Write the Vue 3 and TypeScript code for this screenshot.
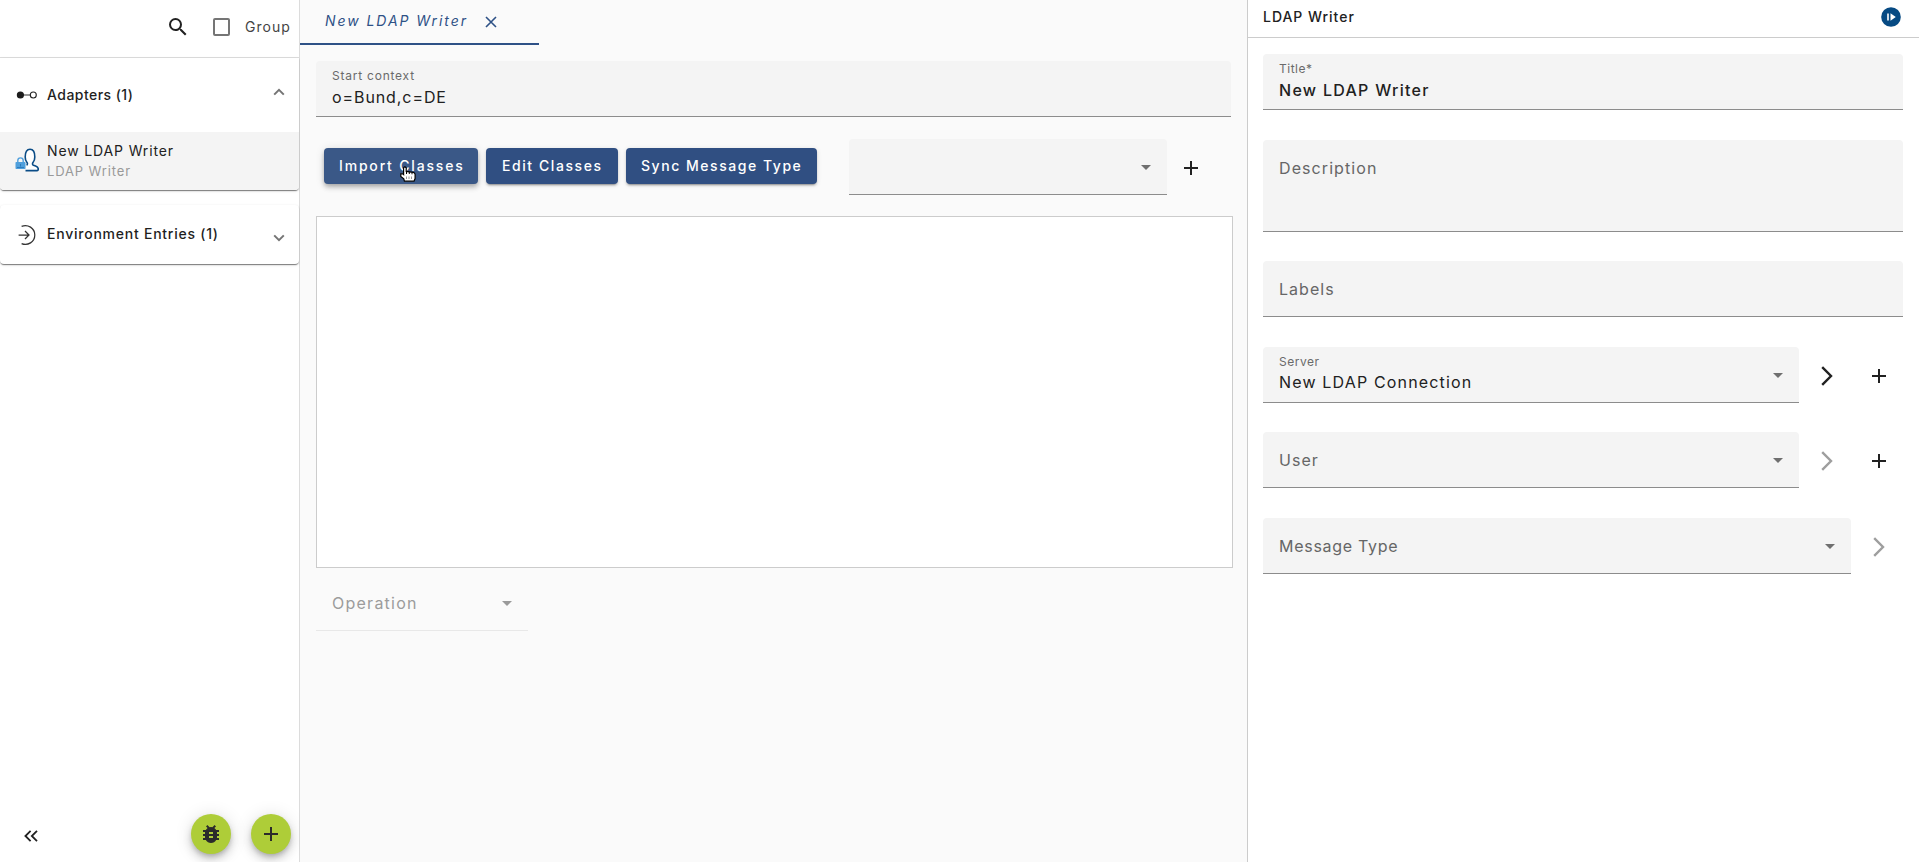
<script setup lang="ts">
interface Field {
  id: string
  label: string
  value?: string
  select?: boolean
  open?: boolean
  openEnabled?: boolean
  add?: boolean
}

const fields: Field[] = [
  { id: 'title', label: 'Title*', value: 'New LDAP Writer' },
  { id: 'description', label: 'Description' },
  { id: 'labels', label: 'Labels' },
  { id: 'server', label: 'Server', value: 'New LDAP Connection', select: true, open: true, openEnabled: true, add: true },
  { id: 'user', label: 'User', select: true, open: true, add: true },
  { id: 'message', label: 'Message Type', select: true, open: true },
]
</script>

<template>
  <div class="app">
    <aside class="sidebar">
      <header class="tools">
        <svg class="search" viewBox="0 0 24 24"><path d="M15.5 14h-.79l-.28-.27A6.47 6.47 0 0 0 16 9.5 6.5 6.5 0 1 0 9.5 16c1.61 0 3.09-.59 4.23-1.57l.27.28v.79l5 4.99L20.49 19l-4.99-5zm-6 0C7.01 14 5 11.99 5 9.5S7.01 5 9.5 5 14 7.01 14 9.5 11.99 14 9.5 14z" /></svg>
        <span class="checkbox"></span>
        <span class="group-label">Group</span>
      </header>

      <section class="panel adapters">
        <div class="panel-head">
          <svg class="panel-icon" viewBox="0 0 24 24"><path d="M8 12h7" stroke="#555" stroke-width="1.2" /><circle cx="5.4" cy="12" r="3.6" fill="#1c1c1c" /><circle cx="18.3" cy="12" r="3" fill="#fff" stroke="#222" stroke-width="1.1" /></svg>
          <span class="panel-title t-adapters">Adapters (1)</span>
          <svg class="chev up" viewBox="0 0 12 8"><path d="M1.2 6.6 6 1.8l4.8 4.8" /></svg>
        </div>
        <div class="entry">
          <svg class="entry-icon" viewBox="0 0 24 24">
            <path d="M10.500 22.600h11.500q1.400-.2 1.300-1.700-.2-2.200-2.700-3l-2.200-.7c-1.100-.5-1.100-1.700-.4-2.600 1.300-1.500 1.800-3 1.800-5.600C19.800 4 18.300 1.200 15 1.200S10.200 4 10.200 9c0 2.600.5 4.100 1.800 5.600.7.900.6 2-.4 2.600" fill="#fff" stroke="#0a4c86" stroke-width="1.600" />
            <path d="M2.800 14.500v-1.900a2.700 2.700 0 0 1 5.400 0v1.900" fill="none" stroke="#4f9fdc" stroke-width="1.400" />
            <rect x=".5" y="14" width="10" height="7" rx=".8" fill="#4f9fdc" /><path d="M5.500 16v2.600M2 19.500h7" stroke="#2b78b8" stroke-width=".9" />
          </svg>
          <div class="entry-text">
            <span class="entry-name">New LDAP Writer</span>
            <span class="entry-type">LDAP Writer</span>
          </div>
        </div>
      </section>

      <section class="panel environment">
        <div class="panel-head">
          <svg class="panel-icon" viewBox="0 0 24 24"><path d="M6.600 3.400A9.400 9.400 0 1 1 6.600 20.600M3.600 12h10.200M10 8l4 4-4 4" fill="none" stroke="#333" stroke-width="1.250" /></svg>
          <span class="panel-title t-environment">Environment Entries (1)</span>
          <svg class="chev down" viewBox="0 0 12 8"><path d="M1.200 1.400 6 6.200l4.800-4.800" /></svg>
        </div>
      </section>

      <footer class="actions">
        <svg class="collapse" viewBox="0 0 14 12"><path d="M6.600.8 1.400 6l5.200 5.200M13 .8 7.800 6l5.200 5.200" /></svg>
        <button class="fab bug"><svg viewBox="0 0 24 24"><path d="M20 8h-2.810a5.985 5.985 0 0 0-1.820-1.960L17 4.410 15.590 3l-2.170 2.170a6.002 6.002 0 0 0-2.830 0L8.410 3 7 4.410l1.620 1.630C7.880 6.550 7.260 7.220 6.810 8H4v2h2.090c-.05.330-.09.660-.09 1v1H4v2h2v1c0 .340.040.670.090 1H4v2h2.810A5.990 5.990 0 0 0 12 21c2.220 0 4.160-1.210 5.190-3H20v-2h-2.090c.050-.330.090-.660.090-1v-1h2v-2h-2v-1c0-.340-.040-.670-.090-1H20V8zm-6 8h-4v-2h4v2zm0-4h-4v-2h4v2z" /></svg></button>
        <button class="fab"><svg viewBox="0 0 24 24"><path d="M12 5v14M5 12h14" stroke="#2b2b2b" stroke-width="2" /></svg></button>
      </footer>
    </aside>

    <main class="editor">
      <nav class="tab">
        <span class="tab-name">New LDAP Writer</span>
        <svg class="close" viewBox="0 0 12 12"><path d="m1 1 10 10M11 1 1 11" /></svg>
      </nav>
      <div class="content">
        <div class="field filled start">
          <span class="label">Start context</span>
          <span class="value">o=Bund,c=DE</span>
        </div>
        <div class="toolbar">
          <button class="btn import">Import Classes
            <svg class="pointer" viewBox="0 0 16 16"><path d="M3.600 1.800Q4.800 0 6.200 1.800V5.400l7 1q1.900.4 1.900 2v4.200L14 15.200H4.400L3.800 12.800.8 10.400V7.800h2.100l.7.700z" fill="#fff" stroke="#000" stroke-width="1.200" /><path d="M6.500 5v3M9.300 6v2M12 6.500v1.800" stroke="#000" /><path d="M6.500 10.500v2.500M9 10.500v2.500M11.500 10.500v2.500" stroke="#999" /></svg>
          </button>
          <button class="btn edit">Edit Classes</button>
          <button class="btn sync">Sync Message Type</button>
          <div class="field class-select"><i class="caret"></i></div>
          <svg class="plus" viewBox="0 0 14 14"><path d="M7 0v14M0 7h14" /></svg>
        </div>
        <div class="canvas"></div>
        <div class="field disabled operation"><span class="label">Operation</span><i class="caret"></i></div>
      </div>
    </main>

    <aside class="details">
      <header class="details-head">
        <span class="details-title">LDAP Writer</span>
        <svg class="run" viewBox="0 0 20 20"><circle cx="10" cy="10" r="9.800" fill="#064a83" /><path d="M6.200 6.500h1.600v7H6.200zM9.500 6.200v7.600l5.300-3.800z" fill="#fff" /></svg>
      </header>
      <div class="form">
        <div v-for="f in fields" :key="f.id" class="row" :class="'row-' + f.id">
          <div class="field" :class="[f.id, { filled: f.value }]">
            <span class="label">{{ f.label }}</span>
            <span v-if="f.value" class="value">{{ f.value }}</span>
            <i v-if="f.select" class="caret"></i>
          </div>
          <span v-if="f.open" class="slot"><svg class="go" :class="{ off: !f.openEnabled }" viewBox="0 0 12 20"><path d="m1.200 1.200 8.800 8.800-8.800 8.800" /></svg></span>
          <span v-if="f.add" class="slot"><svg class="plus" viewBox="0 0 14 14"><path d="M7 0v14M0 7h14" /></svg></span>
        </div>
      </div>
    </aside>
  </div>
</template>

<style>
body { margin: 0; overflow: hidden; }
</style>

<style scoped>
* { box-sizing: border-box; }
.app { display: flex; height: 862px; background: #fff; color: #212121; font: 400 14px Inter, "Open Sans", sans-serif; white-space: nowrap; }
svg { display: block; flex: none; }
button { border: 0; padding: 0; font: inherit; }

.sidebar { width: 300px; flex: none; display: flex; flex-direction: column; border-right: 1px solid #dcdcdc; }
.tools { height: 58px; padding: 0 8px 4px 166px; display: flex; align-items: center; border-bottom: 1px solid #dedede; }
.search { width: 24px; height: 24px; fill: #212121; }
.checkbox { width: 18px; height: 18px; margin-left: 23px; border: 2px solid #757575; border-radius: 2px; }
.group-label { margin-left: 15px; letter-spacing: 1.07px; color: #444; }
.panel { background: #fff; border-radius: 0 0 4px 4px; box-shadow: 0 2px 1px -1px rgba(0,0,0,.3), 0 1px 1px rgba(0,0,0,.22), 0 1px 3px rgba(0,0,0,.14); }
.panel-head { display: flex; align-items: center; padding: 0 14px 0 15px; }
.adapters .panel-head { height: 74px; }
.environment { margin-top: 15px; border-radius: 4px; }
.environment .panel-head { height: 59px; }
.panel-icon { width: 24px; height: 24px; }
.panel-title { margin: 0 0 2px 8px; font-weight: 450; color: #1f1f1f; }
.t-adapters { letter-spacing: .46px; }
.t-environment { letter-spacing: .76px; }
.chev { width: 12px; height: 8px; margin-left: auto; fill: none; stroke: #757575; stroke-width: 2; }
.up { margin-bottom: 6px; }
.down { margin-top: 6px; }
.entry { height: 58px; display: flex; padding: 8px 15px; background: #f4f4f4; border-radius: 0 0 4px 4px; }
.entry-icon { width: 24px; height: 24px; margin-top: 8px; }
.entry-text { margin-left: 8px; display: flex; flex-direction: column; }
.entry-name { line-height: 22px; letter-spacing: .86px; }
.entry-type { line-height: 18px; font-size: 13px; letter-spacing: .86px; color: #999; }
.actions { margin-top: auto; display: flex; align-items: center; padding: 0 8px 8px 24px; }
.collapse { width: 14px; height: 12px; margin-top: 4px; margin-right: auto; fill: none; stroke: #212121; stroke-width: 1.8; }
.fab { width: 40px; height: 40px; border-radius: 50%; background: #aecd38; display: flex; align-items: center; justify-content: center; box-shadow: 0 3px 5px -1px rgba(0,0,0,.2), 0 6px 10px rgba(0,0,0,.14), 0 1px 18px rgba(0,0,0,.12); }
.fab svg { width: 24px; height: 24px; fill: #2b2b2b; }
.fab.bug { margin-right: 20px; }

.editor { width: 947px; flex: none; background: #fafafa; }
.tab { width: 239px; height: 45px; display: flex; padding: 0 0 0 25px; border-bottom: 2px solid #2e5186; color: #2e5186; }
.tab-name { width: 151px; line-height: 42px; font-style: italic; font-weight: 450; letter-spacing: 1.94px; }
.close { width: 12px; height: 12px; margin: 16px 0 0 9px; fill: none; stroke: #2e5186; stroke-width: 1.6; }
.content { padding: 16px 13px 0 16px; }
.toolbar { display: flex; align-items: flex-start; padding: 31px 0 0 8px; }
.btn { position: relative; flex: none; height: 36px; line-height: 36px; text-align: left; margin-right: 8px; border-radius: 4px; background: #304f82; color: #fff; font-weight: 450; box-shadow: 0 3px 1px -2px rgba(0,0,0,.2), 0 2px 2px rgba(0,0,0,.14), 0 1px 5px rgba(0,0,0,.12); }
.import { width: 154px; padding-left: 15px; letter-spacing: 1.82px; background: #3a5887; box-shadow: 0 2px 4px -1px rgba(0,0,0,.2), 0 4px 5px rgba(0,0,0,.14), 0 1px 10px rgba(0,0,0,.12); }
.edit { width: 132px; padding-left: 16px; letter-spacing: 1.57px; }
.sync { width: 191px; padding-left: 15px; letter-spacing: 1.54px; }
.pointer { position: absolute; left: 76px; top: 18px; width: 16px; height: 16px; }
.start { width: 915px; }
.class-select { flex: none; width: 318px; margin: -9px 0 0 24px; }
.plus { width: 14px; height: 14px; stroke: #212121; stroke-width: 2; }
.toolbar .plus { margin: 13px 0 0 17px; }
.canvas { width: 917px; height: 352px; margin-top: 21px; border: 1px solid #ccc; background: #fff; }
.operation { width: 212px; margin-top: 7px; }

.field { position: relative; height: 56px; display: flex; padding: 0 16px; background: #f4f4f4; border-bottom: 1px solid #8c8c8c; border-radius: 4px 4px 0 0; }
.label { font-size: 16px; line-height: 56px; color: #666; }
.filled { flex-direction: column; }
.filled .label { margin-top: 6px; font-size: 12px; line-height: 18px; color: #6a6a6a; }
.value { font-size: 16px; line-height: 24px; color: #212121; }
.caret { position: absolute; right: 16px; top: 26px; border: 5px solid transparent; border-top-color: #6f6f6f; border-bottom: 0; }
.disabled { background: #fafafa; border-bottom-color: #e8e8e8; }
.disabled .label { color: #9c9c9c; }
.disabled .caret { border-top-color: #9a9a9a; }
.start .label { letter-spacing: .77px; }
.start .value { letter-spacing: .91px; }
.operation .label { letter-spacing: 1.25px; }

.details { flex: 1; border-left: 1px solid #ccc; }
.details-head { height: 38px; display: flex; align-items: center; justify-content: space-between; padding: 0 18px 4px 15px; border-bottom: 1px solid #ccc; }
.details-title { font-weight: 450; letter-spacing: .97px; }
.run { width: 20px; height: 20px; }
.form { padding: 16px 16px 0 15px; }
.row { display: flex; margin-bottom: 30px; }
.row-description { margin-bottom: 29px; }
.row-server { margin-bottom: 29px; }
.row .field { flex: 1; }
.slot { width: 52px; height: 58px; display: flex; align-items: center; justify-content: center; padding-left: 4px; }
.row .slot { margin-bottom: -2px; }
.go { width: 12px; height: 20px; fill: none; stroke: #212121; stroke-width: 2.400; }
.go.off { stroke: #9e9e9e; }
.field.description { height: 92px; }
.title .label { letter-spacing: .5px; }
.title .value { font-weight: 500; letter-spacing: 1.28px; }
.description .label { letter-spacing: 1.08px; }
.labels .label { letter-spacing: 1.02px; }
.server .label { letter-spacing: .52px; }
.server .value { margin-top: -1px; letter-spacing: 1.16px; }
.user .label { letter-spacing: 1.02px; }
.message .label { letter-spacing: .72px; }
</style>
